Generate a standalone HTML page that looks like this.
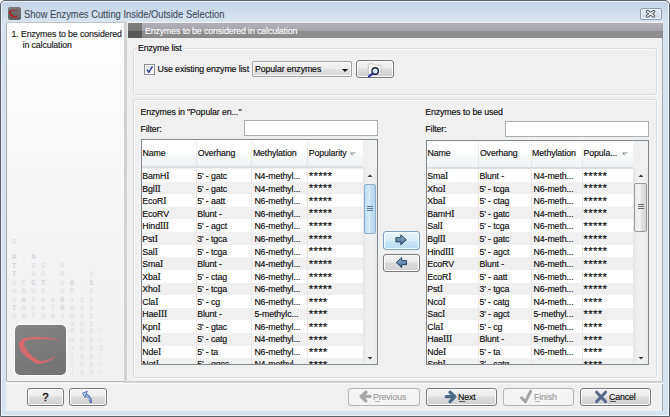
<!DOCTYPE html><html><head><meta charset="utf-8"><style>
*{margin:0;padding:0;box-sizing:border-box}
html,body{width:670px;height:417px;overflow:hidden;background:#fff}
body{position:relative;font-family:"Liberation Sans",sans-serif;font-size:8.8px;color:#0c0c0c;-webkit-text-stroke:0.15px currentColor}
.a{position:absolute}
.t{position:absolute;white-space:nowrap;line-height:10px;letter-spacing:-0.12px}
#win{left:0;top:0;width:670px;height:417px;border:1.5px solid #5c6166;border-radius:5px 5px 0 0;background:linear-gradient(#c3d3e4 0px,#d8e4f0 20px,#d6e3f1 60px,#d6e3f1 100%);box-shadow:inset 0 0 0 1px #eaf1f8}
#client{left:6px;top:22px;width:657px;height:388.5px;background:#f0f0f0;border-right:1px solid #a8a8a8}
.btn{position:absolute;border:1px solid #7a7a7a;border-radius:3px;background:linear-gradient(#f4f4f4 0%,#ebebeb 45%,#dddddd 50%,#d0d0d0 100%);box-shadow:inset 0 0 0 1px #fcfcfc}
.btn.dis{border-color:#b5b5b5;background:#f4f4f4;box-shadow:none}
.grp{position:absolute;border:1px solid #d5dfe5;border-radius:2px;box-shadow:1px 1px 0 #fbfbfb,inset 1px 1px 0 #fbfbfb}
.field{position:absolute;background:#fff;border:1px solid #abadb3;border-top-color:#abadb3}
.tbl{position:absolute;border:1px solid #828790;background:#f0f0f0;overflow:hidden}
.hdr{position:absolute;top:0;height:28px;background:linear-gradient(#ffffff 0%,#ffffff 40%,#f7f8f9 60%,#f1f2f4 92%,#dcdee2 92%,#dcdee2 100%)}
.hsep{position:absolute;top:0;height:28px;width:1px;background:linear-gradient(#f4f4f4,#dfe1e4)}
.row{position:absolute;left:0;height:12.62px;background:#fff}
.row.g{background:#f0f0f0}
.cell{position:absolute;white-space:nowrap;line-height:12px;top:0.5px;letter-spacing:-0.12px}
.star{font-size:11.5px;line-height:12px;letter-spacing:0.25px}
.si{font-family:'Liberation Serif',serif;font-size:9.6px;letter-spacing:-0.3px}
.csep{position:absolute;width:1px;background:#ebe6e8}
</style></head><body><div id="win" class="a"></div><div class="a" style="left:8px;top:7px;width:13px;height:13px;border-radius:2px;background:linear-gradient(#7a7a7a,#5e5e5e)"></div><svg class="a" style="left:8px;top:7px" width="13" height="13" viewBox="0 0 13 13"><path d="M11.2 3.3 C7 2.4 2 2.9 1.1 4.7 C0.5 6.6 3 9.6 6.6 10.8 C8 10.6 9.6 9.6 10.6 8.3 C9 9.1 7.8 9.4 6.8 9.3 C4.4 8 2.4 6.5 2.6 5.2 C3 3.9 7 3.5 11.2 3.3Z" fill="#b81c1c"/></svg><div class="t" style="left:23.6px;top:7.8px;font-size:10.6px;line-height:12px;color:#3e4c5a;letter-spacing:0;-webkit-text-stroke:0.1px #3e4c5a;transform:scaleX(0.884);transform-origin:0 0;line-height:12px">Show Enzymes Cutting Inside/Outside Selection</div><div class="a" style="left:640px;top:8px;width:22px;height:11.5px;border:1px solid #8f9db3;border-radius:2px;background:linear-gradient(#e2eaf3,#cfdbe8);box-shadow:inset 0 0 0 1px #eef3f8"></div><svg class="a" style="left:640px;top:8px" width="22" height="12" viewBox="0 0 22 12"><path d="M7.6 3.6 L13.6 8 M13.6 3.6 L7.6 8" stroke="#4e545e" stroke-width="3.4" stroke-linecap="round"/><path d="M7.6 3.6 L13.6 8 M13.6 3.6 L7.6 8" stroke="#f6f6f6" stroke-width="1.5" stroke-linecap="round"/></svg><div id="client" class="a"></div><div class="a" style="left:6px;top:22px;width:118.5px;height:360px;border-left:1px solid #a9a9a9;border-top:1px solid #c4c4c4;border-bottom:1px solid #b4b4b4;border-radius:2px 0 0 2px;background:linear-gradient(#ffffff 0%,#fbfbfb 20%,#f4f4f4 65%,#f1f1f1 100%)"></div><div class="a" style="left:124.3px;top:22px;width:2.4px;height:361px;background:#d2d2d2"></div><div class="t" style="left:11.6px;top:28.6px;color:#1a1a1a">1. Enzymes to be considered</div><div class="t" style="left:22.6px;top:39.6px;color:#1a1a1a">in calculation</div><div class="t" style="left:11.9px;top:236.7px;font-family:'Liberation Mono',monospace;font-size:7.5px;font-weight:bold;color:#e3e3e3;letter-spacing:0;-webkit-text-stroke:0">G</div><div class="t" style="left:11.9px;top:252.4px;font-family:'Liberation Mono',monospace;font-size:7.5px;font-weight:bold;color:#d6d6d6;letter-spacing:0;-webkit-text-stroke:0">A</div><div class="t" style="left:31.2px;top:252.4px;font-family:'Liberation Mono',monospace;font-size:7.5px;font-weight:bold;color:#d6d6d6;letter-spacing:0;-webkit-text-stroke:0">A</div><div class="t" style="left:11.9px;top:260.8px;font-family:'Liberation Mono',monospace;font-size:7.5px;font-weight:bold;color:#d6d6d6;letter-spacing:0;-webkit-text-stroke:0">T</div><div class="t" style="left:31.2px;top:260.8px;font-family:'Liberation Mono',monospace;font-size:7.5px;font-weight:bold;color:#e3e3e3;letter-spacing:0;-webkit-text-stroke:0">C</div><div class="t" style="left:40.9px;top:260.8px;font-family:'Liberation Mono',monospace;font-size:7.5px;font-weight:bold;color:#e3e3e3;letter-spacing:0;-webkit-text-stroke:0">C</div><div class="t" style="left:60.1px;top:260.8px;font-family:'Liberation Mono',monospace;font-size:7.5px;font-weight:bold;color:#e3e3e3;letter-spacing:0;-webkit-text-stroke:0">0</div><div class="t" style="left:11.9px;top:269.2px;font-family:'Liberation Mono',monospace;font-size:7.5px;font-weight:bold;color:#d6d6d6;letter-spacing:0;-webkit-text-stroke:0">T</div><div class="t" style="left:31.2px;top:269.2px;font-family:'Liberation Mono',monospace;font-size:7.5px;font-weight:bold;color:#e3e3e3;letter-spacing:0;-webkit-text-stroke:0">A</div><div class="t" style="left:40.9px;top:269.2px;font-family:'Liberation Mono',monospace;font-size:7.5px;font-weight:bold;color:#e3e3e3;letter-spacing:0;-webkit-text-stroke:0">C</div><div class="t" style="left:60.1px;top:269.2px;font-family:'Liberation Mono',monospace;font-size:7.5px;font-weight:bold;color:#e3e3e3;letter-spacing:0;-webkit-text-stroke:0">0</div><div class="t" style="left:89.1px;top:269.2px;font-family:'Liberation Mono',monospace;font-size:7.5px;font-weight:bold;color:#e3e3e3;letter-spacing:0;-webkit-text-stroke:0">1</div><div class="t" style="left:11.9px;top:278.0px;font-family:'Liberation Mono',monospace;font-size:7.5px;font-weight:bold;color:#e3e3e3;letter-spacing:0;-webkit-text-stroke:0">A</div><div class="t" style="left:21.6px;top:278.0px;font-family:'Liberation Mono',monospace;font-size:7.5px;font-weight:bold;color:#e3e3e3;letter-spacing:0;-webkit-text-stroke:0">C</div><div class="t" style="left:31.2px;top:278.0px;font-family:'Liberation Mono',monospace;font-size:7.5px;font-weight:bold;color:#d6d6d6;letter-spacing:0;-webkit-text-stroke:0">C</div><div class="t" style="left:40.9px;top:278.0px;font-family:'Liberation Mono',monospace;font-size:7.5px;font-weight:bold;color:#d6d6d6;letter-spacing:0;-webkit-text-stroke:0">T</div><div class="t" style="left:60.1px;top:278.0px;font-family:'Liberation Mono',monospace;font-size:7.5px;font-weight:bold;color:#e3e3e3;letter-spacing:0;-webkit-text-stroke:0">0</div><div class="t" style="left:69.8px;top:278.0px;font-family:'Liberation Mono',monospace;font-size:7.5px;font-weight:bold;color:#d6d6d6;letter-spacing:0;-webkit-text-stroke:0">0</div><div class="t" style="left:89.1px;top:278.0px;font-family:'Liberation Mono',monospace;font-size:7.5px;font-weight:bold;color:#d6d6d6;letter-spacing:0;-webkit-text-stroke:0">1</div><div class="t" style="left:11.9px;top:286.2px;font-family:'Liberation Mono',monospace;font-size:7.5px;font-weight:bold;color:#e3e3e3;letter-spacing:0;-webkit-text-stroke:0">A</div><div class="t" style="left:21.6px;top:286.2px;font-family:'Liberation Mono',monospace;font-size:7.5px;font-weight:bold;color:#e3e3e3;letter-spacing:0;-webkit-text-stroke:0">A</div><div class="t" style="left:31.2px;top:286.2px;font-family:'Liberation Mono',monospace;font-size:7.5px;font-weight:bold;color:#e3e3e3;letter-spacing:0;-webkit-text-stroke:0">G</div><div class="t" style="left:40.9px;top:286.2px;font-family:'Liberation Mono',monospace;font-size:7.5px;font-weight:bold;color:#e3e3e3;letter-spacing:0;-webkit-text-stroke:0">G</div><div class="t" style="left:60.1px;top:286.2px;font-family:'Liberation Mono',monospace;font-size:7.5px;font-weight:bold;color:#e3e3e3;letter-spacing:0;-webkit-text-stroke:0">0</div><div class="t" style="left:69.8px;top:286.2px;font-family:'Liberation Mono',monospace;font-size:7.5px;font-weight:bold;color:#e3e3e3;letter-spacing:0;-webkit-text-stroke:0">0</div><div class="t" style="left:89.1px;top:286.2px;font-family:'Liberation Mono',monospace;font-size:7.5px;font-weight:bold;color:#e3e3e3;letter-spacing:0;-webkit-text-stroke:0">1</div><div class="t" style="left:11.9px;top:294.5px;font-family:'Liberation Mono',monospace;font-size:7.5px;font-weight:bold;color:#e3e3e3;letter-spacing:0;-webkit-text-stroke:0">G</div><div class="t" style="left:21.6px;top:294.5px;font-family:'Liberation Mono',monospace;font-size:7.5px;font-weight:bold;color:#d6d6d6;letter-spacing:0;-webkit-text-stroke:0">A</div><div class="t" style="left:31.2px;top:294.5px;font-family:'Liberation Mono',monospace;font-size:7.5px;font-weight:bold;color:#e3e3e3;letter-spacing:0;-webkit-text-stroke:0">T</div><div class="t" style="left:40.9px;top:294.5px;font-family:'Liberation Mono',monospace;font-size:7.5px;font-weight:bold;color:#e3e3e3;letter-spacing:0;-webkit-text-stroke:0">G</div><div class="t" style="left:50.5px;top:294.5px;font-family:'Liberation Mono',monospace;font-size:7.5px;font-weight:bold;color:#e3e3e3;letter-spacing:0;-webkit-text-stroke:0">A</div><div class="t" style="left:60.1px;top:294.5px;font-family:'Liberation Mono',monospace;font-size:7.5px;font-weight:bold;color:#d6d6d6;letter-spacing:0;-webkit-text-stroke:0">0</div><div class="t" style="left:69.8px;top:294.5px;font-family:'Liberation Mono',monospace;font-size:7.5px;font-weight:bold;color:#e3e3e3;letter-spacing:0;-webkit-text-stroke:0">1</div><div class="t" style="left:79.5px;top:294.5px;font-family:'Liberation Mono',monospace;font-size:7.5px;font-weight:bold;color:#e3e3e3;letter-spacing:0;-webkit-text-stroke:0">1</div><div class="t" style="left:89.1px;top:294.5px;font-family:'Liberation Mono',monospace;font-size:7.5px;font-weight:bold;color:#e3e3e3;letter-spacing:0;-webkit-text-stroke:0">0</div><div class="t" style="left:11.9px;top:302.6px;font-family:'Liberation Mono',monospace;font-size:7.5px;font-weight:bold;color:#d6d6d6;letter-spacing:0;-webkit-text-stroke:0">T</div><div class="t" style="left:21.6px;top:302.6px;font-family:'Liberation Mono',monospace;font-size:7.5px;font-weight:bold;color:#e3e3e3;letter-spacing:0;-webkit-text-stroke:0">A</div><div class="t" style="left:31.2px;top:302.6px;font-family:'Liberation Mono',monospace;font-size:7.5px;font-weight:bold;color:#e3e3e3;letter-spacing:0;-webkit-text-stroke:0">G</div><div class="t" style="left:40.9px;top:302.6px;font-family:'Liberation Mono',monospace;font-size:7.5px;font-weight:bold;color:#e3e3e3;letter-spacing:0;-webkit-text-stroke:0">A</div><div class="t" style="left:50.5px;top:302.6px;font-family:'Liberation Mono',monospace;font-size:7.5px;font-weight:bold;color:#e3e3e3;letter-spacing:0;-webkit-text-stroke:0">T</div><div class="t" style="left:60.1px;top:302.6px;font-family:'Liberation Mono',monospace;font-size:7.5px;font-weight:bold;color:#d6d6d6;letter-spacing:0;-webkit-text-stroke:0">0</div><div class="t" style="left:69.8px;top:302.6px;font-family:'Liberation Mono',monospace;font-size:7.5px;font-weight:bold;color:#e3e3e3;letter-spacing:0;-webkit-text-stroke:0">0</div><div class="t" style="left:79.5px;top:302.6px;font-family:'Liberation Mono',monospace;font-size:7.5px;font-weight:bold;color:#e3e3e3;letter-spacing:0;-webkit-text-stroke:0">1</div><div class="t" style="left:89.1px;top:302.6px;font-family:'Liberation Mono',monospace;font-size:7.5px;font-weight:bold;color:#e3e3e3;letter-spacing:0;-webkit-text-stroke:0">0</div><div class="t" style="left:11.9px;top:310.5px;font-family:'Liberation Mono',monospace;font-size:7.5px;font-weight:bold;color:#e3e3e3;letter-spacing:0;-webkit-text-stroke:0">G</div><div class="t" style="left:21.6px;top:310.5px;font-family:'Liberation Mono',monospace;font-size:7.5px;font-weight:bold;color:#e3e3e3;letter-spacing:0;-webkit-text-stroke:0">A</div><div class="t" style="left:31.2px;top:310.5px;font-family:'Liberation Mono',monospace;font-size:7.5px;font-weight:bold;color:#e3e3e3;letter-spacing:0;-webkit-text-stroke:0">T</div><div class="t" style="left:40.9px;top:310.5px;font-family:'Liberation Mono',monospace;font-size:7.5px;font-weight:bold;color:#e3e3e3;letter-spacing:0;-webkit-text-stroke:0">G</div><div class="t" style="left:50.5px;top:310.5px;font-family:'Liberation Mono',monospace;font-size:7.5px;font-weight:bold;color:#e3e3e3;letter-spacing:0;-webkit-text-stroke:0">A</div><div class="t" style="left:60.1px;top:310.5px;font-family:'Liberation Mono',monospace;font-size:7.5px;font-weight:bold;color:#e3e3e3;letter-spacing:0;-webkit-text-stroke:0">1</div><div class="t" style="left:69.8px;top:310.5px;font-family:'Liberation Mono',monospace;font-size:7.5px;font-weight:bold;color:#e3e3e3;letter-spacing:0;-webkit-text-stroke:0">0</div><div class="t" style="left:79.5px;top:310.5px;font-family:'Liberation Mono',monospace;font-size:7.5px;font-weight:bold;color:#e3e3e3;letter-spacing:0;-webkit-text-stroke:0">1</div><div class="t" style="left:89.1px;top:310.5px;font-family:'Liberation Mono',monospace;font-size:7.5px;font-weight:bold;color:#e3e3e3;letter-spacing:0;-webkit-text-stroke:0">1</div><div class="t" style="left:69.8px;top:318.6px;font-family:'Liberation Mono',monospace;font-size:7.5px;font-weight:bold;color:#e3e3e3;letter-spacing:0;-webkit-text-stroke:0">0</div><div class="t" style="left:79.5px;top:318.6px;font-family:'Liberation Mono',monospace;font-size:7.5px;font-weight:bold;color:#e3e3e3;letter-spacing:0;-webkit-text-stroke:0">0</div><div class="t" style="left:89.1px;top:318.6px;font-family:'Liberation Mono',monospace;font-size:7.5px;font-weight:bold;color:#e3e3e3;letter-spacing:0;-webkit-text-stroke:0">1</div><div class="t" style="left:69.8px;top:326.4px;font-family:'Liberation Mono',monospace;font-size:7.5px;font-weight:bold;color:#e3e3e3;letter-spacing:0;-webkit-text-stroke:0">0</div><div class="t" style="left:79.5px;top:326.4px;font-family:'Liberation Mono',monospace;font-size:7.5px;font-weight:bold;color:#e3e3e3;letter-spacing:0;-webkit-text-stroke:0">0</div><div class="t" style="left:89.1px;top:326.4px;font-family:'Liberation Mono',monospace;font-size:7.5px;font-weight:bold;color:#e3e3e3;letter-spacing:0;-webkit-text-stroke:0">0</div><div class="t" style="left:98.8px;top:326.4px;font-family:'Liberation Mono',monospace;font-size:7.5px;font-weight:bold;color:#ececec;letter-spacing:0;-webkit-text-stroke:0">0</div><div class="t" style="left:69.8px;top:334.6px;font-family:'Liberation Mono',monospace;font-size:7.5px;font-weight:bold;color:#e3e3e3;letter-spacing:0;-webkit-text-stroke:0">0</div><div class="t" style="left:79.5px;top:334.6px;font-family:'Liberation Mono',monospace;font-size:7.5px;font-weight:bold;color:#e3e3e3;letter-spacing:0;-webkit-text-stroke:0">0</div><div class="t" style="left:89.1px;top:334.6px;font-family:'Liberation Mono',monospace;font-size:7.5px;font-weight:bold;color:#e3e3e3;letter-spacing:0;-webkit-text-stroke:0">0</div><div class="t" style="left:98.8px;top:334.6px;font-family:'Liberation Mono',monospace;font-size:7.5px;font-weight:bold;color:#ececec;letter-spacing:0;-webkit-text-stroke:0">0</div><div class="t" style="left:69.8px;top:343.3px;font-family:'Liberation Mono',monospace;font-size:7.5px;font-weight:bold;color:#e3e3e3;letter-spacing:0;-webkit-text-stroke:0">1</div><div class="t" style="left:79.5px;top:343.3px;font-family:'Liberation Mono',monospace;font-size:7.5px;font-weight:bold;color:#e3e3e3;letter-spacing:0;-webkit-text-stroke:0">0</div><div class="t" style="left:89.1px;top:343.3px;font-family:'Liberation Mono',monospace;font-size:7.5px;font-weight:bold;color:#e3e3e3;letter-spacing:0;-webkit-text-stroke:0">0</div><div class="t" style="left:98.8px;top:343.3px;font-family:'Liberation Mono',monospace;font-size:7.5px;font-weight:bold;color:#e3e3e3;letter-spacing:0;-webkit-text-stroke:0">1</div><div class="t" style="left:69.8px;top:352.2px;font-family:'Liberation Mono',monospace;font-size:7.5px;font-weight:bold;color:#e3e3e3;letter-spacing:0;-webkit-text-stroke:0">1</div><div class="t" style="left:79.5px;top:352.2px;font-family:'Liberation Mono',monospace;font-size:7.5px;font-weight:bold;color:#e3e3e3;letter-spacing:0;-webkit-text-stroke:0">1</div><div class="t" style="left:89.1px;top:352.2px;font-family:'Liberation Mono',monospace;font-size:7.5px;font-weight:bold;color:#e3e3e3;letter-spacing:0;-webkit-text-stroke:0">1</div><div class="t" style="left:98.8px;top:352.2px;font-family:'Liberation Mono',monospace;font-size:7.5px;font-weight:bold;color:#ececec;letter-spacing:0;-webkit-text-stroke:0">1</div><div class="t" style="left:69.8px;top:360.3px;font-family:'Liberation Mono',monospace;font-size:7.5px;font-weight:bold;color:#e3e3e3;letter-spacing:0;-webkit-text-stroke:0">1</div><div class="t" style="left:79.5px;top:360.3px;font-family:'Liberation Mono',monospace;font-size:7.5px;font-weight:bold;color:#e3e3e3;letter-spacing:0;-webkit-text-stroke:0">0</div><div class="t" style="left:89.1px;top:360.3px;font-family:'Liberation Mono',monospace;font-size:7.5px;font-weight:bold;color:#e3e3e3;letter-spacing:0;-webkit-text-stroke:0">1</div><div class="t" style="left:98.8px;top:360.3px;font-family:'Liberation Mono',monospace;font-size:7.5px;font-weight:bold;color:#ececec;letter-spacing:0;-webkit-text-stroke:0">0</div><div class="t" style="left:69.8px;top:368.4px;font-family:'Liberation Mono',monospace;font-size:7.5px;font-weight:bold;color:#e3e3e3;letter-spacing:0;-webkit-text-stroke:0">1</div><div class="t" style="left:79.5px;top:368.4px;font-family:'Liberation Mono',monospace;font-size:7.5px;font-weight:bold;color:#e3e3e3;letter-spacing:0;-webkit-text-stroke:0">1</div><div class="t" style="left:89.1px;top:368.4px;font-family:'Liberation Mono',monospace;font-size:7.5px;font-weight:bold;color:#e3e3e3;letter-spacing:0;-webkit-text-stroke:0">0</div><div class="t" style="left:98.8px;top:368.4px;font-family:'Liberation Mono',monospace;font-size:7.5px;font-weight:bold;color:#ececec;letter-spacing:0;-webkit-text-stroke:0">0</div><div class="a" style="left:15px;top:325px;width:51px;height:50px;border-radius:5px;background:linear-gradient(160deg,#848484,#727272);box-shadow:0 0 1px 1px #fbfbfb"></div><svg class="a" style="left:15px;top:325px" width="51" height="51" viewBox="0 0 51 51"><path d="M47.5 14.8 C36 12 17 11 10.5 12.8 C6 14.2 3.6 17 3.8 20.5 C4.3 26.5 12 34.5 23 39 C30 38.5 36 35.5 41.5 31.3 C35 34.5 29.5 36 25.5 36.2 C18 33 11 25.5 9.2 20.5 C8.6 17.5 10 15.4 13.2 14.8 C22 13.8 38 14.3 47.5 14.8Z" fill="#d26a6e"/></svg><div class="a" style="left:127px;top:22px;width:536px;height:1px;background:#f4f1ea"></div><div class="a" style="left:128px;top:23px;width:535px;height:15px;background:linear-gradient(#b2b0b8 0%,#a6a4ac 50%,#8e8e8e 55%,#8c8c8c 100%)"></div><div class="a" style="left:128px;top:23px;width:14px;height:15px;background:linear-gradient(#7e7e7e 0%,#787878 50%,#575757 55%,#5a5a5a 100%)"></div><div class="t" style="left:145px;top:25.5px;color:#ffffff;font-size:8.8px;-webkit-text-stroke:0.1px #ffffff">Enzymes to be considered in calculation</div><div class="grp" style="left:133.2px;top:47.5px;width:523.5px;height:47.4px"></div><div class="a" style="left:137px;top:44px;width:44px;height:8px;background:#f0f0f0"></div><div class="t" style="left:138px;top:43px">Enzyme list</div><div class="a" style="left:144px;top:63.5px;width:11px;height:11px;border:1px solid #8e8f8f;background:linear-gradient(135deg,#dcdcdc,#fbfbfb);box-shadow:inset 0 0 0 1px #f4f4f4"></div><svg class="a" style="left:144px;top:63.5px" width="11" height="11" viewBox="0 0 11 11"><path d="M3 5.6 L4.8 8.4 L8.4 2.4" stroke="#2b3f8f" stroke-width="1.4" fill="none" stroke-linejoin="round"/></svg><div class="t" style="left:157.5px;top:64px">Use existing enzyme list</div><div class="a" style="left:252px;top:61px;width:100px;height:16px;border:1px solid #a3a3a3;border-radius:2px;background:linear-gradient(#f4f4f4 0%,#ececec 50%,#dfdfdf 55%,#dadada 100%);box-shadow:inset 0 0 0 1px #fafafa"></div><div class="t" style="left:255px;top:64px">Popular enzymes</div><svg class="a" style="left:341px;top:68px" width="8" height="5" viewBox="0 0 8 5"><path d="M1 1 L7 1 L4 4Z" fill="#111"/></svg><div class="btn" style="left:356px;top:60px;width:38px;height:18px"></div><svg class="a" style="left:362px;top:60px" width="26" height="18" viewBox="0 0 26 18"><path d="M6.3 4.2 L9.8 3.4 L12 4.9 L18.8 5.2 L18.8 14.3 L6.3 14.3 Z" fill="#fbfbfb" stroke="#bdbdbd" stroke-width="0.8"/><path d="M10.8 13.4 L7 16.4" stroke="#2838a0" stroke-width="2.2" stroke-linecap="round"/><circle cx="13.2" cy="11" r="3.2" fill="#d4e6fa" stroke="#1c2440" stroke-width="1.4"/></svg><div class="grp" style="left:133.2px;top:99.3px;width:523.5px;height:278.6px"></div><div class="t" style="left:140.5px;top:107px">Enzymes in "Popular en..."</div><div class="t" style="left:140.5px;top:123.5px">Filter:</div><div class="field" style="left:244px;top:120px;width:134px;height:16px"></div><div class="t" style="left:425.3px;top:107px">Enzymes to be used</div><div class="t" style="left:425.3px;top:123.5px">Filter:</div><div class="field" style="left:505px;top:120.5px;width:144px;height:16px"></div><div class="tbl" style="left:141px;top:139px;width:237px;height:226px"><div class="hdr" style="left:0;width:221px"></div><div class="hsep" style="left:54.19999999999999px"></div><div class="hsep" style="left:109.4px"></div><div class="hsep" style="left:165.2px"></div><svg class="a" style="left:208px;top:12px" width="7" height="5" viewBox="0 0 7 5"><path d="M0.5 1 L5.5 1 M1 1 L2.6 3.5" stroke="#8a8a8a" stroke-width="1" fill="none"/></svg><div class="cell" style="left:0.5px;top:6.5px">Name</div><div class="cell" style="left:55.69999999999999px;top:6.5px">Overhang</div><div class="cell" style="left:110.9px;top:6.5px">Methylation</div><div class="cell" style="left:166.7px;top:6.5px">Popularity</div><div class="row" style="top:29.00px;width:221px"></div><div class="cell" style="left:0.3px;top:30.20px">BamH<span class="si">I</span></div><div class="cell" style="left:55.19999999999999px;top:30.20px">5' - gatc</div><div class="cell" style="left:112.4px;top:30.20px">N4-methyl...</div><div class="cell star" style="left:166.7px;top:29.60px">*****</div><div class="row g" style="top:41.62px;width:221px"></div><div class="cell" style="left:0.3px;top:42.75px">Bgl<span class="si">I</span><span class="si">I</span></div><div class="cell" style="left:55.19999999999999px;top:42.75px">5' - gatc</div><div class="cell" style="left:112.4px;top:42.75px">N4-methyl...</div><div class="cell star" style="left:166.7px;top:42.22px">*****</div><div class="row" style="top:54.24px;width:221px"></div><div class="cell" style="left:0.3px;top:55.30px">EcoR<span class="si">I</span></div><div class="cell" style="left:55.19999999999999px;top:55.30px">5' - aatt</div><div class="cell" style="left:112.4px;top:55.30px">N6-methyl...</div><div class="cell star" style="left:166.7px;top:54.84px">*****</div><div class="row g" style="top:66.86px;width:221px"></div><div class="cell" style="left:0.3px;top:67.85px">EcoRV</div><div class="cell" style="left:55.19999999999999px;top:67.85px">Blunt -</div><div class="cell" style="left:112.4px;top:67.85px">N6-methyl...</div><div class="cell star" style="left:166.7px;top:67.46px">*****</div><div class="row" style="top:79.48px;width:221px"></div><div class="cell" style="left:0.3px;top:80.40px">Hind<span class="si">I</span><span class="si">I</span><span class="si">I</span></div><div class="cell" style="left:55.19999999999999px;top:80.40px">5' - agct</div><div class="cell" style="left:112.4px;top:80.40px">N6-methyl...</div><div class="cell star" style="left:166.7px;top:80.08px">*****</div><div class="row g" style="top:92.10px;width:221px"></div><div class="cell" style="left:0.3px;top:92.95px">Pst<span class="si">I</span></div><div class="cell" style="left:55.19999999999999px;top:92.95px">3' - tgca</div><div class="cell" style="left:112.4px;top:92.95px">N6-methyl...</div><div class="cell star" style="left:166.7px;top:92.70px">*****</div><div class="row" style="top:104.72px;width:221px"></div><div class="cell" style="left:0.3px;top:105.50px">Sal<span class="si">I</span></div><div class="cell" style="left:55.19999999999999px;top:105.50px">5' - tcga</div><div class="cell" style="left:112.4px;top:105.50px">N6-methyl...</div><div class="cell star" style="left:166.7px;top:105.32px">*****</div><div class="row g" style="top:117.34px;width:221px"></div><div class="cell" style="left:0.3px;top:118.05px">Sma<span class="si">I</span></div><div class="cell" style="left:55.19999999999999px;top:118.05px">Blunt -</div><div class="cell" style="left:112.4px;top:118.05px">N4-methyl...</div><div class="cell star" style="left:166.7px;top:117.94px">*****</div><div class="row" style="top:129.96px;width:221px"></div><div class="cell" style="left:0.3px;top:130.60px">Xba<span class="si">I</span></div><div class="cell" style="left:55.19999999999999px;top:130.60px">5' - ctag</div><div class="cell" style="left:112.4px;top:130.60px">N6-methyl...</div><div class="cell star" style="left:166.7px;top:130.56px">*****</div><div class="row g" style="top:142.58px;width:221px"></div><div class="cell" style="left:0.3px;top:143.15px">Xho<span class="si">I</span></div><div class="cell" style="left:55.19999999999999px;top:143.15px">5' - tcga</div><div class="cell" style="left:112.4px;top:143.15px">N6-methyl...</div><div class="cell star" style="left:166.7px;top:143.18px">*****</div><div class="row" style="top:155.20px;width:221px"></div><div class="cell" style="left:0.3px;top:155.70px">Cla<span class="si">I</span></div><div class="cell" style="left:55.19999999999999px;top:155.70px">5' - cg</div><div class="cell" style="left:112.4px;top:155.70px">N6-methyl...</div><div class="cell star" style="left:166.7px;top:155.80px">****</div><div class="row g" style="top:167.82px;width:221px"></div><div class="cell" style="left:0.3px;top:168.25px">Hae<span class="si">I</span><span class="si">I</span><span class="si">I</span></div><div class="cell" style="left:55.19999999999999px;top:168.25px">Blunt -</div><div class="cell" style="left:112.4px;top:168.25px">5-methylc...</div><div class="cell star" style="left:166.7px;top:168.42px">****</div><div class="row" style="top:180.44px;width:221px"></div><div class="cell" style="left:0.3px;top:180.80px">Kpn<span class="si">I</span></div><div class="cell" style="left:55.19999999999999px;top:180.80px">3' - gtac</div><div class="cell" style="left:112.4px;top:180.80px">N6-methyl...</div><div class="cell star" style="left:166.7px;top:181.04px">****</div><div class="row g" style="top:193.06px;width:221px"></div><div class="cell" style="left:0.3px;top:193.35px">Nco<span class="si">I</span></div><div class="cell" style="left:55.19999999999999px;top:193.35px">5' - catg</div><div class="cell" style="left:112.4px;top:193.35px">N4-methyl...</div><div class="cell star" style="left:166.7px;top:193.66px">****</div><div class="row" style="top:205.68px;width:221px"></div><div class="cell" style="left:0.3px;top:205.90px">Nde<span class="si">I</span></div><div class="cell" style="left:55.19999999999999px;top:205.90px">5' - ta</div><div class="cell" style="left:112.4px;top:205.90px">N6-methyl...</div><div class="cell star" style="left:166.7px;top:206.28px">****</div><div class="row g" style="top:218.30px;width:221px"></div><div class="cell" style="left:0.3px;top:218.45px">Not<span class="si">I</span></div><div class="cell" style="left:55.19999999999999px;top:218.45px">5' - ggcc</div><div class="cell" style="left:112.4px;top:218.45px">N4-methyl...</div><div class="cell star" style="left:166.7px;top:218.90px">****</div><div class="csep" style="left:54.19999999999999px;top:29.0px;height:226px"></div><div class="csep" style="left:109.4px;top:29.0px;height:226px"></div><div class="csep" style="left:165.2px;top:29.0px;height:226px"></div><div class="a" style="left:221px;top:28.0px;width:14px;height:226px;background:linear-gradient(90deg,#e6e6e6,#f0f0f0 30%,#f0f0f0 70%,#e8e8e8)"></div><svg class="a" style="left:224.0px;top:33px" width="8" height="5" viewBox="0 0 8 5"><path d="M1.5 4 L6.5 4 L4 1.5Z" fill="#3c3c3c"/></svg><svg class="a" style="left:224.0px;top:215.5px" width="8" height="5" viewBox="0 0 8 5"><path d="M1.5 1 L6.5 1 L4 3.5Z" fill="#3c3c3c"/></svg><div class="a" style="left:222px;top:43.5px;width:12px;height:50px;border-radius:2px;border:1px solid #8bb0d0;background:linear-gradient(90deg,#bcdcf0,#d8ecf8 45%,#c4e2f4 55%,#b0d6ee);"></div><div class="a" style="left:225.0px;top:65.5px;width:6px;height:1px;background:#5a7c98"></div><div class="a" style="left:225.0px;top:67.5px;width:6px;height:1px;background:#5a7c98"></div><div class="a" style="left:225.0px;top:69.5px;width:6px;height:1px;background:#5a7c98"></div></div><div class="tbl" style="left:426px;top:139.5px;width:223px;height:225.5px"><div class="hdr" style="left:0;width:206px"></div><div class="hsep" style="left:51.39999999999998px"></div><div class="hsep" style="left:103.60000000000002px"></div><div class="hsep" style="left:155px"></div><svg class="a" style="left:194.5px;top:11.5px" width="7" height="5" viewBox="0 0 7 5"><path d="M0.5 1 L5.5 1 M1 1 L2.6 3.5" stroke="#8a8a8a" stroke-width="1" fill="none"/></svg><div class="cell" style="left:0.5px;top:6.5px">Name</div><div class="cell" style="left:52.89999999999998px;top:6.5px">Overhang</div><div class="cell" style="left:105.10000000000002px;top:6.5px">Methylation</div><div class="cell" style="left:156.5px;top:6.5px">Popula...</div><div class="row" style="top:28.50px;width:206px"></div><div class="cell" style="left:0.3px;top:29.70px">Sma<span class="si">I</span></div><div class="cell" style="left:52.39999999999998px;top:29.70px">Blunt -</div><div class="cell" style="left:106.60000000000002px;top:29.70px">N4-meth...</div><div class="cell star" style="left:156.5px;top:29.10px">*****</div><div class="row g" style="top:41.12px;width:206px"></div><div class="cell" style="left:0.3px;top:42.25px">Xho<span class="si">I</span></div><div class="cell" style="left:52.39999999999998px;top:42.25px">5' - tcga</div><div class="cell" style="left:106.60000000000002px;top:42.25px">N6-meth...</div><div class="cell star" style="left:156.5px;top:41.72px">*****</div><div class="row" style="top:53.74px;width:206px"></div><div class="cell" style="left:0.3px;top:54.80px">Xba<span class="si">I</span></div><div class="cell" style="left:52.39999999999998px;top:54.80px">5' - ctag</div><div class="cell" style="left:106.60000000000002px;top:54.80px">N6-meth...</div><div class="cell star" style="left:156.5px;top:54.34px">*****</div><div class="row g" style="top:66.36px;width:206px"></div><div class="cell" style="left:0.3px;top:67.35px">BamH<span class="si">I</span></div><div class="cell" style="left:52.39999999999998px;top:67.35px">5' - gatc</div><div class="cell" style="left:106.60000000000002px;top:67.35px">N4-meth...</div><div class="cell star" style="left:156.5px;top:66.96px">*****</div><div class="row" style="top:78.98px;width:206px"></div><div class="cell" style="left:0.3px;top:79.90px">Sal<span class="si">I</span></div><div class="cell" style="left:52.39999999999998px;top:79.90px">5' - tcga</div><div class="cell" style="left:106.60000000000002px;top:79.90px">N6-meth...</div><div class="cell star" style="left:156.5px;top:79.58px">*****</div><div class="row g" style="top:91.60px;width:206px"></div><div class="cell" style="left:0.3px;top:92.45px">Bgl<span class="si">I</span><span class="si">I</span></div><div class="cell" style="left:52.39999999999998px;top:92.45px">5' - gatc</div><div class="cell" style="left:106.60000000000002px;top:92.45px">N4-meth...</div><div class="cell star" style="left:156.5px;top:92.20px">*****</div><div class="row" style="top:104.22px;width:206px"></div><div class="cell" style="left:0.3px;top:105.00px">Hind<span class="si">I</span><span class="si">I</span><span class="si">I</span></div><div class="cell" style="left:52.39999999999998px;top:105.00px">5' - agct</div><div class="cell" style="left:106.60000000000002px;top:105.00px">N6-meth...</div><div class="cell star" style="left:156.5px;top:104.82px">*****</div><div class="row g" style="top:116.84px;width:206px"></div><div class="cell" style="left:0.3px;top:117.55px">EcoRV</div><div class="cell" style="left:52.39999999999998px;top:117.55px">Blunt -</div><div class="cell" style="left:106.60000000000002px;top:117.55px">N6-meth...</div><div class="cell star" style="left:156.5px;top:117.44px">*****</div><div class="row" style="top:129.46px;width:206px"></div><div class="cell" style="left:0.3px;top:130.10px">EcoR<span class="si">I</span></div><div class="cell" style="left:52.39999999999998px;top:130.10px">5' - aatt</div><div class="cell" style="left:106.60000000000002px;top:130.10px">N6-meth...</div><div class="cell star" style="left:156.5px;top:130.06px">*****</div><div class="row g" style="top:142.08px;width:206px"></div><div class="cell" style="left:0.3px;top:142.65px">Pst<span class="si">I</span></div><div class="cell" style="left:52.39999999999998px;top:142.65px">3' - tgca</div><div class="cell" style="left:106.60000000000002px;top:142.65px">N6-meth...</div><div class="cell star" style="left:156.5px;top:142.68px">*****</div><div class="row" style="top:154.70px;width:206px"></div><div class="cell" style="left:0.3px;top:155.20px">Nco<span class="si">I</span></div><div class="cell" style="left:52.39999999999998px;top:155.20px">5' - catg</div><div class="cell" style="left:106.60000000000002px;top:155.20px">N4-meth...</div><div class="cell star" style="left:156.5px;top:155.30px">****</div><div class="row g" style="top:167.32px;width:206px"></div><div class="cell" style="left:0.3px;top:167.75px">Sac<span class="si">I</span></div><div class="cell" style="left:52.39999999999998px;top:167.75px">3' - agct</div><div class="cell" style="left:106.60000000000002px;top:167.75px">5-methyl...</div><div class="cell star" style="left:156.5px;top:167.92px">****</div><div class="row" style="top:179.94px;width:206px"></div><div class="cell" style="left:0.3px;top:180.30px">Cla<span class="si">I</span></div><div class="cell" style="left:52.39999999999998px;top:180.30px">5' - cg</div><div class="cell" style="left:106.60000000000002px;top:180.30px">N6-meth...</div><div class="cell star" style="left:156.5px;top:180.54px">****</div><div class="row g" style="top:192.56px;width:206px"></div><div class="cell" style="left:0.3px;top:192.85px">Hae<span class="si">I</span><span class="si">I</span><span class="si">I</span></div><div class="cell" style="left:52.39999999999998px;top:192.85px">Blunt -</div><div class="cell" style="left:106.60000000000002px;top:192.85px">5-methyl...</div><div class="cell star" style="left:156.5px;top:193.16px">****</div><div class="row" style="top:205.18px;width:206px"></div><div class="cell" style="left:0.3px;top:205.40px">Nde<span class="si">I</span></div><div class="cell" style="left:52.39999999999998px;top:205.40px">5' - ta</div><div class="cell" style="left:106.60000000000002px;top:205.40px">N6-meth...</div><div class="cell star" style="left:156.5px;top:205.78px">****</div><div class="row g" style="top:217.80px;width:206px"></div><div class="cell" style="left:0.3px;top:217.95px">Sph<span class="si">I</span></div><div class="cell" style="left:52.39999999999998px;top:217.95px">3' - catg</div><div class="cell" style="left:106.60000000000002px;top:217.95px"></div><div class="cell star" style="left:156.5px;top:218.40px">****</div><div class="csep" style="left:51.39999999999998px;top:28.5px;height:225.5px"></div><div class="csep" style="left:103.60000000000002px;top:28.5px;height:225.5px"></div><div class="csep" style="left:155px;top:28.5px;height:225.5px"></div><div class="a" style="left:206px;top:27.5px;width:15px;height:225.5px;background:linear-gradient(90deg,#e6e6e6,#f0f0f0 30%,#f0f0f0 70%,#e8e8e8)"></div><svg class="a" style="left:209.5px;top:32.5px" width="8" height="5" viewBox="0 0 8 5"><path d="M1.5 4 L6.5 4 L4 1.5Z" fill="#3c3c3c"/></svg><svg class="a" style="left:209.5px;top:215.0px" width="8" height="5" viewBox="0 0 8 5"><path d="M1.5 1 L6.5 1 L4 3.5Z" fill="#3c3c3c"/></svg><div class="a" style="left:207px;top:42.5px;width:13px;height:48.5px;border-radius:2px;border:1px solid #9a9a9a;background:linear-gradient(90deg,#e8e8e8,#f4f4f4 45%,#e4e4e4 55%,#d6d6d6);"></div><div class="a" style="left:210.5px;top:63.75px;width:6px;height:1px;background:#6a6a6a"></div><div class="a" style="left:210.5px;top:65.75px;width:6px;height:1px;background:#6a6a6a"></div><div class="a" style="left:210.5px;top:67.75px;width:6px;height:1px;background:#6a6a6a"></div></div><div class="a" style="left:383px;top:231px;width:37px;height:19px;border:1px solid #7c9fbd;border-radius:3px;background:linear-gradient(#e8f4fb 0%,#dbeef9 50%,#c6e5f5 55%,#b8ddf1 100%);box-shadow:inset 0 0 0 1px #f4fbfe"></div><svg class="a" style="left:394px;top:234px" width="16" height="12" viewBox="0 0 16 12"><defs><linearGradient id="ag" x1="0" y1="0" x2="0" y2="1"><stop offset="0" stop-color="#9cbcdc"/><stop offset="1" stop-color="#3e6088"/></linearGradient></defs><path d="M1.9 3.7 L6.8 3.7 L6.8 0.8 L12.4 5.8 L6.8 10.8 L6.8 7.9 L1.9 7.9 Z" fill="url(#ag)" stroke="#2a4666" stroke-width="1" stroke-linejoin="round"/></svg><div class="btn" style="left:383px;top:254px;width:37px;height:18px"></div><svg class="a" style="left:394px;top:257px" width="16" height="12" viewBox="0 0 16 12"><path d="M12.6 3.6 L7.7 3.6 L7.7 0.6 L2.2 5.5 L7.7 10.5 L7.7 7.6 L12.6 7.6 Z" fill="url(#ag)" stroke="#2a4666" stroke-width="1" stroke-linejoin="round"/></svg><div class="a" style="left:124px;top:381.3px;width:539px;height:1.4px;background:#d2d2d2"></div><div class="a" style="left:6px;top:383px;width:657px;height:1px;background:#fafafa"></div><div class="btn" style="left:27px;top:388px;width:37px;height:18px"></div><div class="t" style="left:42.4px;top:391.2px;font-size:10.8px;color:#111;line-height:12px;-webkit-text-stroke:0.4px #111">?</div><div class="btn" style="left:69px;top:388px;width:38px;height:18px"></div><svg class="a" style="left:76px;top:388px" width="24" height="18" viewBox="0 0 24 18"><path d="M9.2 6.2 Q13.8 8.2 14.8 13.8" stroke="#5470b4" stroke-width="2.7" fill="none" stroke-linecap="round"/><path d="M9.5 6.6 Q13.3 8.4 14.2 12.6" stroke="#c4d6f0" stroke-width="1" fill="none"/><path d="M6.6 5.2 L11.2 3.4 L9 9.6Z" fill="#c0d4f0" stroke="#5470b4" stroke-width="1" stroke-linejoin="round"/></svg><div class="btn dis" style="left:348px;top:388px;width:71.5px;height:18px"></div><svg class="a" style="left:355px;top:388px" width="20" height="18" viewBox="0 0 20 18"><path d="M6 8.4 L15.2 8.4 M11 4.2 L6 8.5 L11 13" stroke="#a8a8a8" stroke-width="3.1" fill="none" stroke-linecap="round" stroke-linejoin="round"/></svg><div class="t" style="left:373px;top:392px;color:#9c9c9c">Previous</div><div class="a" style="left:374.5px;top:401px;width:5px;height:1px;background:#b0b0b0"></div><div class="btn" style="left:425.5px;top:388px;width:71px;height:18px"></div><svg class="a" style="left:440px;top:388px" width="20" height="18" viewBox="0 0 20 18"><path d="M6.2 8.7 L14.2 8.7 M10 4.2 L15 8.7 L10 13.6" stroke="#4b6a8c" stroke-width="3.2" fill="none" stroke-linecap="round" stroke-linejoin="round"/></svg><div class="t" style="left:458px;top:392px">Next</div><div class="a" style="left:459px;top:401px;width:6px;height:1px;background:#555"></div><div class="btn dis" style="left:502.5px;top:388px;width:71px;height:18px"></div><svg class="a" style="left:515px;top:388px" width="20" height="18" viewBox="0 0 20 18"><path d="M6.5 9.8 L10.4 13.8 L15.6 3.3" stroke="#a4a4a4" stroke-width="3" fill="none" stroke-linecap="round" stroke-linejoin="round"/></svg><div class="t" style="left:534px;top:392px;color:#9c9c9c">Finish</div><div class="a" style="left:535px;top:401px;width:5px;height:1px;background:#b0b0b0"></div><div class="btn" style="left:580px;top:388px;width:71px;height:18px"></div><svg class="a" style="left:588px;top:388px" width="22" height="18" viewBox="0 0 22 18"><path d="M8.6 4.2 L17.6 13.6 M17.6 4.2 L8.6 13.6" stroke="#566a8a" stroke-width="3" fill="none" stroke-linecap="round"/></svg><div class="t" style="left:609px;top:392px">Cancel</div><div class="a" style="left:610px;top:401px;width:5.5px;height:1px;background:#555"></div></body></html>
